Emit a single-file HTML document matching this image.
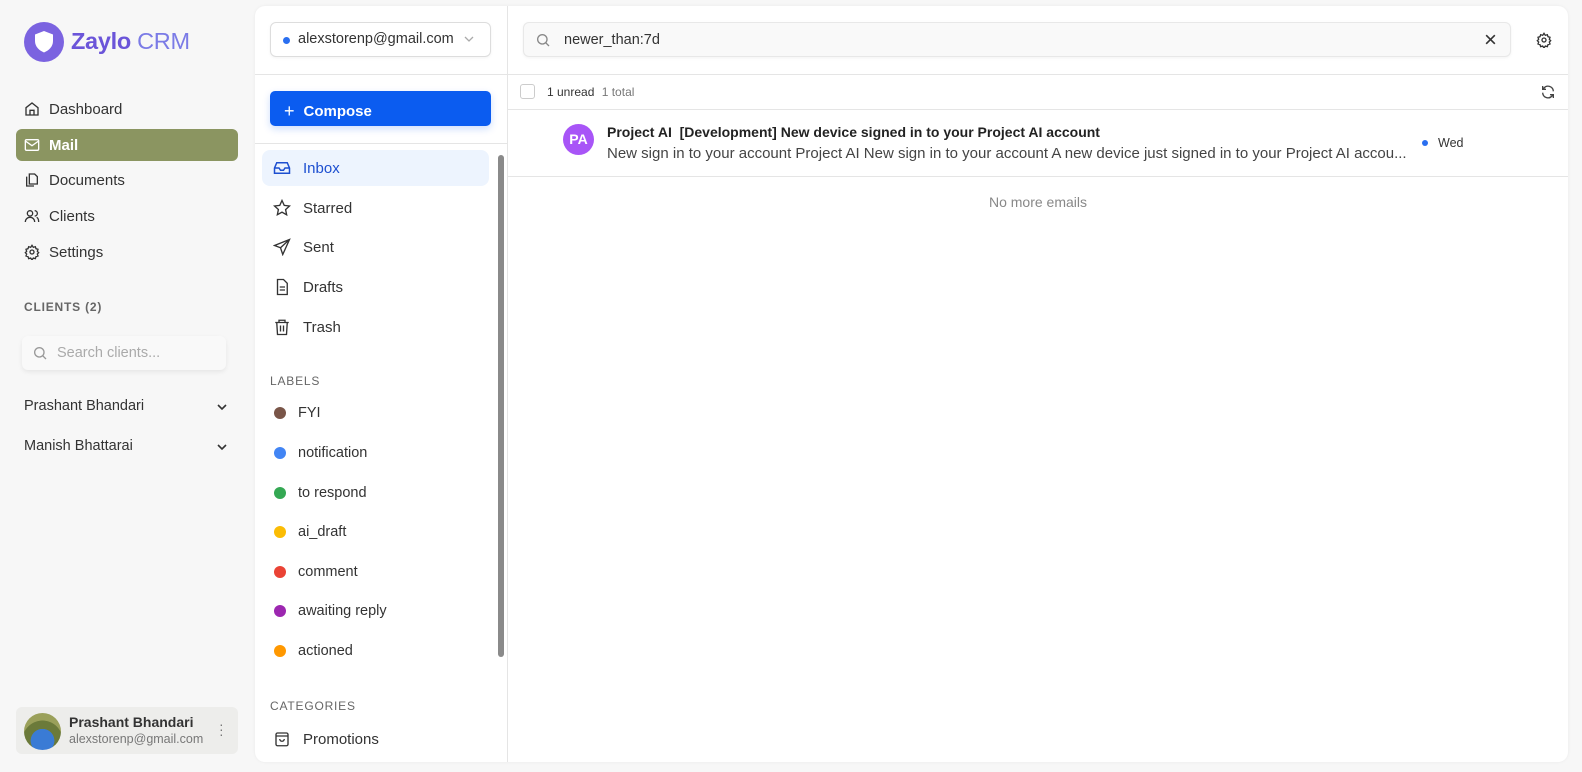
<!DOCTYPE html>
<html><head><meta charset="utf-8"><style>
*{box-sizing:border-box;margin:0;padding:0}
body{width:1582px;height:772px;background:#f7f7f7;font-family:"Liberation Sans",sans-serif;position:relative;overflow:hidden;color:#222}
.a{position:absolute}
svg{display:block}
.nav{position:absolute;left:16px;width:222px;height:32px;display:flex;align-items:center;padding-left:8px;font-size:15px;color:#333;border-radius:6px}
.nav svg{margin-right:9px}
.mi{position:absolute;left:262px;width:227px;height:36px;display:flex;align-items:center;padding-left:11px;font-size:15px;color:#333;border-radius:8px}
.mi svg{margin-right:12px}
.lb{position:absolute;left:274px;display:flex;align-items:center;font-size:14.5px;color:#333}
.dot{width:12px;height:12px;border-radius:50%;margin-right:12px}
.sec{position:absolute;left:270px;font-size:12px;color:#666;letter-spacing:.8px}
</style></head><body>
<div class="a" style="left:24px;top:22px;width:40px;height:40px;border-radius:50%;background:#7b63e0"></div>
<svg class="a" style="left:32px;top:29px" width="24" height="26" viewBox="0 0 24 26"><path d="M12 2 L21 5.5 V12 C21 18 16.5 21.5 12 23.5 C7.5 21.5 3 18 3 12 V5.5 Z" fill="#fff"/></svg>
<div class="a" style="left:71px;top:28px;font-size:23.5px;color:#6b55d9;letter-spacing:-0.3px"><b>Zaylo</b> <span style="color:#7b7be6">CRM</span></div>

<div class="nav" style="top:93px"><svg width="16" height="16" viewBox="0 0 24 24" fill="none" stroke="#333" stroke-width="2"><path d="M3 10l9-7 9 7v11H3z M9 21v-7h6v7"/></svg>Dashboard</div>
<div class="nav" style="top:129px;background:#8b9561;color:#fff;font-weight:bold"><svg width="16" height="16" viewBox="0 0 24 24" fill="none" stroke="#fff" stroke-width="2"><rect x="2" y="4" width="20" height="16" rx="2"/><path d="M2 6l10 7 10-7"/></svg>Mail</div>
<div class="nav" style="top:164px"><svg width="16" height="16" viewBox="0 0 24 24" fill="none" stroke="#333" stroke-width="2"><path d="M8 3h8l4 4v11H8z M4 7v14h11"/></svg>Documents</div>
<div class="nav" style="top:200px"><svg width="16" height="16" viewBox="0 0 24 24" fill="none" stroke="#333" stroke-width="2"><circle cx="9" cy="8" r="4"/><path d="M2 21c0-4 3-7 7-7s7 3 7 7 M16 4a4 4 0 010 8 M19 14c2 1 3 4 3 7"/></svg>Clients</div>
<div class="nav" style="top:236px"><svg width="16" height="16" viewBox="0 0 24 24" fill="none" stroke="#333" stroke-width="2"><circle cx="12" cy="12" r="3"/><path d="M12 2l2 3 3-1 1 3 3 1-1 3 2 2-2 2 1 3-3 1-1 3-3-1-2 3-2-3-3 1-1-3-3-1 1-3-2-2 2-2-1-3 3-1 1-3 3 1z"/></svg>Settings</div>

<div class="a" style="left:24px;top:300px;font-size:12px;font-weight:bold;color:#666;letter-spacing:.8px">CLIENTS (2)</div>
<div class="a" style="left:22px;top:336px;width:204px;height:34px;background:#f9f9f9;border-radius:6px;box-shadow:0 2px 5px rgba(0,0,0,.07)"></div>
<svg class="a" style="left:32px;top:345px" width="16" height="16" viewBox="0 0 24 24" fill="none" stroke="#999" stroke-width="2"><circle cx="11" cy="11" r="7"/><path d="M16 16l5 5"/></svg>
<div class="a" style="left:57px;top:345px;font-size:14.5px;color:#aaa">Search clients...</div>
<div class="a" style="left:24px;top:398px;font-size:14.5px;color:#333">Prashant Bhandari</div>
<div class="a" style="left:24px;top:438px;font-size:14.5px;color:#333">Manish Bhattarai</div>
<svg class="a" style="left:216px;top:401px" width="12" height="12" viewBox="0 0 12 12" fill="none" stroke="#333" stroke-width="1.6"><path d="M2 4l4 4 4-4"/></svg>
<svg class="a" style="left:216px;top:441px" width="12" height="12" viewBox="0 0 12 12" fill="none" stroke="#333" stroke-width="1.6"><path d="M2 4l4 4 4-4"/></svg>

<div class="a" style="left:16px;top:707px;width:222px;height:47px;background:#ededeb;border-radius:6px"></div>
<div class="a" style="left:24px;top:713px;width:37px;height:37px;border-radius:50%;background:radial-gradient(circle at 50% 75%,#3a7bd5 0 35%,#6b7a3a 36% 60%,#9aa05a 61%)"></div>
<div class="a" style="left:69px;top:714px;font-size:14px;font-weight:bold;color:#333">Prashant Bhandari</div>
<div class="a" style="left:69px;top:732px;font-size:12.5px;color:#777">alexstorenp@gmail.com</div>
<div class="a" style="left:219px;top:722px;font-size:14px;color:#777;line-height:5px">·<br>·<br>·</div>

<div class="a" style="left:255px;top:6px;width:1313px;height:756px;background:#fff;border-radius:10px;box-shadow:0 0 3px rgba(0,0,0,.06)"></div>
<div class="a" style="left:507px;top:6px;width:1px;height:756px;background:#e5e5e5"></div>
<div class="a" style="left:255px;top:74px;width:1313px;height:1px;background:#e5e5e5"></div>
<div class="a" style="left:255px;top:143px;width:252px;height:1px;background:#e5e5e5"></div>

<div class="a" style="left:270px;top:22px;width:221px;height:35px;border:1px solid #ddd;border-radius:6px;box-shadow:0 1px 3px rgba(0,0,0,.05)"></div>
<div class="a" style="left:283px;top:37px;width:7px;height:7px;border-radius:50%;background:#2a6ff0"></div>
<div class="a" style="left:298px;top:31px;font-size:14.5px;color:#333">alexstorenp@gmail.com</div>
<svg class="a" style="left:463px;top:34px" width="12" height="10" viewBox="0 0 12 10" fill="none" stroke="#aaa" stroke-width="1.3"><path d="M2 3l4 4 4-4"/></svg>

<div class="a" style="left:270px;top:91px;width:221px;height:35px;background:#0b5cf0;border-radius:5px;box-shadow:0 3px 8px rgba(11,92,240,.2);color:#fff;font-size:15px;font-weight:bold;padding:9px 0 0 14px"><span style="font-weight:normal;font-size:18px;position:relative;top:1px;margin-right:9px">+</span>Compose</div>

<div class="a" style="left:498px;top:155px;width:6px;height:502px;background:#8a8a8a;border-radius:3px"></div>

<div class="mi" style="top:150px;background:#edf4fe;color:#1d4fd0"><svg width="18" height="18" viewBox="0 0 24 24" fill="none" stroke="#1d4fd0" stroke-width="2"><path d="M2 12h6l2 3h4l2-3h6 M5 5h14l3 7v7H2v-7z"/></svg>Inbox</div>
<div class="mi" style="top:190px"><svg width="18" height="18" viewBox="0 0 24 24" fill="none" stroke="#333" stroke-width="1.8"><path d="M12 2l3 6.5 7 .8-5.2 4.8 1.4 7L12 17.6 5.8 21l1.4-7L2 9.3l7-.8z"/></svg>Starred</div>
<div class="mi" style="top:229px"><svg width="18" height="18" viewBox="0 0 24 24" fill="none" stroke="#333" stroke-width="1.8"><path d="M22 2L2 10l8 3 3 9z M22 2L10 13"/></svg>Sent</div>
<div class="mi" style="top:269px"><svg width="18" height="18" viewBox="0 0 24 24" fill="none" stroke="#333" stroke-width="1.8"><path d="M6 2h8l5 5v15H6z M9 12h7 M9 16h7"/></svg>Drafts</div>
<div class="mi" style="top:309px"><svg width="18" height="18" viewBox="0 0 24 24" fill="none" stroke="#333" stroke-width="1.8"><path d="M3 6h18 M8 6V3h8v3 M5 6l1 16h12l1-16 M10 10v8 M14 10v8"/></svg>Trash</div>

<div class="sec" style="top:374px">LABELS</div>
<div class="lb" style="top:405px"><div class="dot" style="background:#795548"></div>FYI</div>
<div class="lb" style="top:445px"><div class="dot" style="background:#4285f4"></div>notification</div>
<div class="lb" style="top:485px"><div class="dot" style="background:#34a853"></div>to respond</div>
<div class="lb" style="top:524px"><div class="dot" style="background:#fbbc04"></div>ai_draft</div>
<div class="lb" style="top:564px"><div class="dot" style="background:#ea4335"></div>comment</div>
<div class="lb" style="top:603px"><div class="dot" style="background:#9c27b0"></div>awaiting reply</div>
<div class="lb" style="top:643px"><div class="dot" style="background:#ff9800"></div>actioned</div>
<div class="sec" style="top:699px">CATEGORIES</div>
<div class="mi" style="top:721px"><svg width="18" height="18" viewBox="0 0 24 24" fill="none" stroke="#333" stroke-width="1.8"><rect x="4" y="4" width="16" height="17" rx="2"/><path d="M4 8h16 M9 12a3 3 0 006 0"/></svg>Promotions</div>

<div class="a" style="left:523px;top:22px;width:988px;height:35px;background:#f9f9f9;border:1px solid #e8e8e8;border-radius:6px;box-shadow:0 1px 3px rgba(0,0,0,.05)"></div>
<svg class="a" style="left:535px;top:32px" width="16" height="16" viewBox="0 0 24 24" fill="none" stroke="#888" stroke-width="2"><circle cx="11" cy="11" r="7"/><path d="M16 16l5 5"/></svg>
<div class="a" style="left:564px;top:32px;font-size:14.5px;color:#333">newer_than:7d</div>
<svg class="a" style="left:1484px;top:33px" width="13" height="13" viewBox="0 0 12 12" fill="none" stroke="#333" stroke-width="1.5"><path d="M2 2l8 8M10 2l-8 8"/></svg>
<svg class="a" style="left:1536px;top:32px" width="16" height="16" viewBox="0 0 24 24" fill="none" stroke="#333" stroke-width="2"><circle cx="12" cy="12" r="3"/><path d="M12 2l2 3 3-1 1 3 3 1-1 3 2 2-2 2 1 3-3 1-1 3-3-1-2 3-2-3-3 1-1-3-3-1 1-3-2-2 2-2-1-3 3-1 1-3 3 1z"/></svg>

<div class="a" style="left:520px;top:84px;width:15px;height:15px;border:1px solid #ccc;border-radius:3px"></div>
<div class="a" style="left:547px;top:85px;font-size:12px;color:#333">1 unread <span style="color:#777;margin-left:4px">1 total</span></div>
<svg class="a" style="left:1540px;top:84px" width="16" height="16" viewBox="0 0 24 24" fill="none" stroke="#444" stroke-width="2"><path d="M20 11a8 8 0 00-14-5l-2 2 M4 3v5h5 M4 13a8 8 0 0014 5l2-2 M20 21v-5h-5"/></svg>
<div class="a" style="left:508px;top:109px;width:1060px;height:1px;background:#e5e5e5"></div>

<div class="a" style="left:563px;top:124px;width:31px;height:31px;border-radius:50%;background:#a855f7;color:#fff;font-size:14px;font-weight:bold;text-align:center;line-height:31px">PA</div>
<div class="a" style="left:607px;top:124px;font-size:14px;font-weight:bold;color:#222">Project AI&nbsp; [Development] New device signed in to your Project AI account</div>
<div class="a" style="left:607px;top:145px;font-size:15px;color:#444;white-space:nowrap">New sign in to your account Project AI New sign in to your account A new device just signed in to your Project AI accou...</div>
<div class="a" style="left:1422px;top:140px;width:6px;height:6px;border-radius:50%;background:#2a6ff0"></div>
<div class="a" style="left:1438px;top:136px;font-size:12.5px;color:#333">Wed</div>
<div class="a" style="left:508px;top:176px;width:1060px;height:1px;background:#e5e5e5"></div>
<div class="a" style="left:508px;top:194px;width:1060px;text-align:center;font-size:14px;color:#888">No more emails</div>
</body></html>
